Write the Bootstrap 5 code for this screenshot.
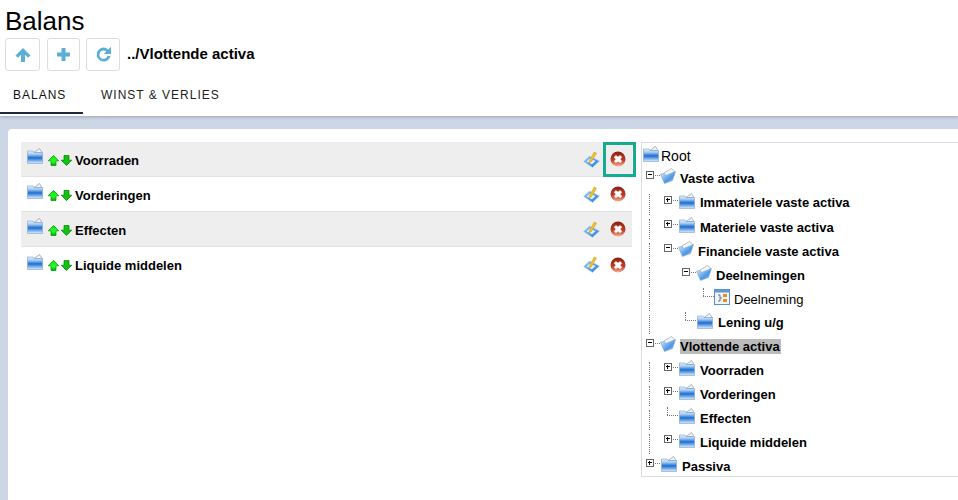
<!DOCTYPE html>
<html lang="nl">
<head>
<meta charset="utf-8">
<title>Balans</title>
<link href="https://cdn.jsdelivr.net/npm/bootstrap@5.3.0/dist/css/bootstrap.min.css" rel="stylesheet">
<style>
html,body{height:100%;overflow:hidden}
body{font-family:"Liberation Sans",Arial,sans-serif;color:#000;background:#ccd6e4}
.top-zone{background:#fff;height:116px;padding:7px 0 0;box-shadow:0 1px 3px rgba(60,80,110,.35);position:relative}
.page-title{font-size:26px;line-height:28px;margin:0 0 3px 5px;font-weight:400}
.tool-row{padding-left:5px;height:33px}
.tool-btn{width:35px;height:33px;padding:0;margin-right:7px;border:1px solid #ddd;border-radius:3px;background:#fff;display:flex;align-items:center;justify-content:center}
.tool-btn.mid{width:33px;margin-right:6px}
.tool-btn.last{width:34px}
.path-text{font-size:15px;font-weight:700}
.tab-row{margin-top:9px;height:34px;border:0}
.tab-row .nav-link{color:#222;font-size:12px;letter-spacing:1px;text-transform:uppercase;padding:0 0 0 13px;height:34px;line-height:30px;border-bottom:2px solid transparent;border-radius:0}
.tab-row .nav-link.tab-on{width:83px;border-bottom-color:#1c2a44;color:#111}
.tab-row .nav-link.tab-off{padding-left:18px}
.white-panel{margin:13px 0 0 8px;background:#fff;border-radius:4px 0 0 0;height:371px;padding:13px 0 0 13px;overflow:hidden}
.list-side{width:611px;flex:none}
.item-row{height:35px;border-bottom:1px solid #e2e2e2;padding-left:6px;font-size:13px;font-weight:700;line-height:15px}
.item-row.shade{background:#eee}
.item-row.tail{border-bottom:0}
.item-name{margin-left:2px;padding-top:2px}
.arr{margin-top:2px}
.row-ico{margin-top:-6px;flex:none}
.act-cell{width:33px;height:35px;margin-right:-4px;margin-left:3px;padding-right:4px;flex:none;display:flex;align-items:center;justify-content:center;border:3px solid transparent}
.act-cell.picked{border-color:#14ab90}
.tree-box{margin-left:9px;width:340px;flex:none;height:335px;border:1px solid #ddd;padding:2px 0 0 3px;font-size:13px;font-weight:700;line-height:15px}
.tr-line{height:24px;white-space:nowrap}
.tr-line.first{height:21px;margin-left:-2px;font-weight:400;font-size:14px}
.tr-line.tall{height:25px}
.tr-line.short{height:23px}
.gd{width:18px;flex:none;align-self:stretch;position:relative}
.gd.on::before{content:"";position:absolute;left:4px;top:4px;bottom:0;border-left:1px dotted #777}
.cn{width:15px;height:24px;flex:none;position:relative}
.cn::after{content:"";position:absolute;left:4px;right:0;top:9px;border-top:1px dotted #777}
.cn.tee::before{content:"";position:absolute;left:4px;top:1px;height:8px;border-left:1px dotted #777}
.cn .bx{position:absolute;left:1px;top:5px;width:8px;height:8px;border:1px solid #666;background:#fff;z-index:1}
.bx::before{content:"";position:absolute;left:1px;right:1px;top:2px;border-top:1px solid #000}
.bx.plus::after{content:"";position:absolute;top:1px;bottom:1px;left:2px;border-left:1px solid #000}
.lbl{margin-left:4px}
.lbl.wide{margin-left:5px}
.lbl.sel{background:#bbb;padding-right:1px}
.lbl.plain{font-weight:400;font-size:13px;margin-left:4px}
.nudge{margin-left:1px}
.root-name{margin-left:2px;margin-top:2px}
.tree-ico{margin-top:-4px;flex:none}
</style>
</head>
<body>
<svg width="0" height="0" class="position-absolute">
<defs>
<linearGradient id="fg" x1="0" y1="0" x2="0" y2="1"><stop offset="0" stop-color="#eaf3fc"/><stop offset=".28" stop-color="#9cc7ef"/><stop offset=".55" stop-color="#1e6cd2"/><stop offset=".78" stop-color="#7db2e9"/><stop offset="1" stop-color="#e3f0fb"/></linearGradient>
<linearGradient id="og" x1="0" y1="0" x2="1" y2="1"><stop offset="0" stop-color="#e4f1fb"/><stop offset=".6" stop-color="#4d97e4"/><stop offset="1" stop-color="#9fcaf2"/></linearGradient>
<linearGradient id="ag" x1="0" y1="0" x2="0" y2="1"><stop offset="0" stop-color="#00e800"/><stop offset=".6" stop-color="#2bff2b"/><stop offset="1" stop-color="#00a000"/></linearGradient>
<linearGradient id="eg" x1="0" y1="0" x2="1" y2="1"><stop offset="0" stop-color="#9ccdf5"/><stop offset="1" stop-color="#1f72d8"/></linearGradient>
<linearGradient id="rg" x1="0" y1="0" x2="0" y2="1"><stop offset="0" stop-color="#8a1e10"/><stop offset=".6" stop-color="#c03e26"/><stop offset="1" stop-color="#f4b49c"/></linearGradient>
<symbol id="fc" viewBox="0 0 16 16"><path d="M7 4.5 12.5 .5 15 4.5Z" fill="#f2f4f7" stroke="#8c98a8" stroke-width=".7"/><path d="M.5 3H6L7 4.5H15.5V15.5H.5Z" fill="url(#fg)" stroke="#8aa9cf" stroke-width=".7"/></symbol>
<symbol id="fo" viewBox="0 0 16 16"><path d="M4 5 11.5 .5 14.5 3 12 9 6 10Z" fill="#f4f6f9" stroke="#8c98a8" stroke-width=".6"/><path d="M.5 6 4 5.5 5.5 7.5 15.5 3.5 12.5 12.5 4.5 15.5 2 10Z" fill="url(#og)" stroke="#7fa8d6" stroke-width=".6"/></symbol>
<symbol id="au" viewBox="0 0 13 13"><path d="M6.5 1.5 11.8 6.8H9V11.5H4V6.8H1.2Z" fill="url(#ag)" stroke="#009000" stroke-width=".7"/></symbol>
<symbol id="ad" viewBox="0 0 13 13"><path d="M6.5 11.5 11.8 6.2H9V1.5H4V6.2H1.2Z" fill="#12c212" stroke="#008000" stroke-width=".7"/></symbol>
<symbol id="ed" viewBox="0 0 17 17"><path d="M.5 10.5 6.5 5 16.5 10 9.5 16.5Z" fill="url(#eg)" stroke="#b6d6f2" stroke-width=".6"/><path d="M3.5 10.5 7 7.5 12.5 10 9 13.2Z" fill="#e4f1fb"/><path d="M6 10.5 11.2 1 13.6 2.2 8.4 10.8 6 12Z" fill="#f2c227" stroke="#a98a20" stroke-width=".4"/></symbol>
<symbol id="de" viewBox="0 0 16 16"><circle cx="8" cy="8" r="7.5" fill="url(#rg)"/><path d="M4.2 6.2 5.8 4.4 8 6 10.2 4.4 11.8 6.2 10.2 8.2 11.8 10.2 10.2 11.8 8 10.4 5.8 11.8 4.2 10.2 5.8 8.2Z" fill="#fff" stroke="#fde8e0" stroke-width=".6" stroke-linejoin="round"/></symbol>
<symbol id="dc" viewBox="0 0 16 16"><rect x=".5" y=".5" width="15" height="15" fill="#eef5fc" stroke="#5f8fc6"/><rect x=".5" y=".5" width="15" height="3" fill="#5f9ad8"/><path d="M4 6H6V12H4M6 9H8" fill="none" stroke="#555" stroke-width=".8"/><rect x="9" y="5" width="4" height="3" fill="#f08a1c"/><rect x="9" y="10" width="4" height="3" fill="#f08a1c"/></symbol>
</defs>
</svg>

<header class="top-zone">
  <h1 class="page-title">Balans</h1>
  <div class="tool-row d-flex align-items-center">
    <button type="button" class="btn tool-btn" aria-label="Omhoog"><svg width="16" height="16" viewBox="0 0 16 16"><path d="M8 1 15.5 8.4 13 10.8 10 7.8V15H6V7.8L3 10.8 .5 8.4Z" fill="#5bafd6"/></svg></button>
    <button type="button" class="btn tool-btn mid" aria-label="Toevoegen"><svg width="15" height="15" viewBox="0 0 15 15"><path d="M5.5 1H9.5V5.5H14V9.5H9.5V14H5.5V9.5H1V5.5H5.5Z" fill="#5bafd6"/></svg></button>
    <button type="button" class="btn tool-btn last" aria-label="Vernieuwen"><svg width="17" height="17" viewBox="0 0 17 17"><path d="M8.5 1.5A7 7 0 1 0 15.6 10H12.6A4.2 4.2 0 1 1 8.5 4.4C9.6 4.4 10.6 4.8 11.3 5.5L8.8 8H16V.8L13.3 3.4A7 7 0 0 0 8.5 1.5Z" fill="#5bafd6"/></svg></button>
    <span class="path-text">../Vlottende activa</span>
  </div>
  <nav class="nav tab-row">
    <a class="nav-link tab-on" href="#">Balans</a>
    <a class="nav-link tab-off" href="#">Winst &amp; verlies</a>
  </nav>
</header>

<main class="white-panel d-flex align-items-start">
  <section class="list-side">
    <div class="item-row shade d-flex align-items-center">
      <svg width="16" height="16" class="row-ico"><use href="#fc"/></svg>
      <svg width="13" height="13" class="arr ms-1"><use href="#au"/></svg><svg width="13" height="13" class="arr"><use href="#ad"/></svg>
      <span class="item-name">Voorraden</span>
      <svg width="17" height="17" class="ms-auto"><use href="#ed"/></svg>
      <span class="act-cell picked"><svg width="16" height="16"><use href="#de"/></svg></span>
    </div>
    <div class="item-row d-flex align-items-center">
      <svg width="16" height="16" class="row-ico"><use href="#fc"/></svg>
      <svg width="13" height="13" class="arr ms-1"><use href="#au"/></svg><svg width="13" height="13" class="arr"><use href="#ad"/></svg>
      <span class="item-name">Vorderingen</span>
      <svg width="17" height="17" class="ms-auto"><use href="#ed"/></svg>
      <span class="act-cell"><svg width="16" height="16"><use href="#de"/></svg></span>
    </div>
    <div class="item-row shade d-flex align-items-center">
      <svg width="16" height="16" class="row-ico"><use href="#fc"/></svg>
      <svg width="13" height="13" class="arr ms-1"><use href="#au"/></svg><svg width="13" height="13" class="arr"><use href="#ad"/></svg>
      <span class="item-name">Effecten</span>
      <svg width="17" height="17" class="ms-auto"><use href="#ed"/></svg>
      <span class="act-cell"><svg width="16" height="16"><use href="#de"/></svg></span>
    </div>
    <div class="item-row tail d-flex align-items-center">
      <svg width="16" height="16" class="row-ico"><use href="#fc"/></svg>
      <svg width="13" height="13" class="arr ms-1"><use href="#au"/></svg><svg width="13" height="13" class="arr"><use href="#ad"/></svg>
      <span class="item-name">Liquide middelen</span>
      <svg width="17" height="17" class="ms-auto"><use href="#ed"/></svg>
      <span class="act-cell"><svg width="16" height="16"><use href="#de"/></svg></span>
    </div>
  </section>

  <section class="tree-box">
    <div class="tr-line first d-flex align-items-center"><svg width="16" height="16" class="tree-ico"><use href="#fc"/></svg><span class="root-name">Root</span></div>
    <div class="tr-line d-flex align-items-center"><span class="cn"><i class="bx"></i></span><svg width="16" height="16" class="tree-ico"><use href="#fo"/></svg><span class="lbl">Vaste activa</span></div>
    <div class="tr-line tall d-flex align-items-center"><span class="gd on"></span><span class="cn"><i class="bx plus"></i></span><svg width="16" height="16" class="tree-ico nudge"><use href="#fc"/></svg><span class="lbl wide">Immateriele vaste activa</span></div>
    <div class="tr-line d-flex align-items-center"><span class="gd on"></span><span class="cn"><i class="bx plus"></i></span><svg width="16" height="16" class="tree-ico nudge"><use href="#fc"/></svg><span class="lbl wide">Materiele vaste activa</span></div>
    <div class="tr-line d-flex align-items-center"><span class="gd on"></span><span class="cn"><i class="bx"></i></span><svg width="16" height="16" class="tree-ico"><use href="#fo"/></svg><span class="lbl">Financiele vaste activa</span></div>
    <div class="tr-line d-flex align-items-center"><span class="gd on"></span><span class="gd"></span><span class="cn"><i class="bx"></i></span><svg width="16" height="16" class="tree-ico"><use href="#fo"/></svg><span class="lbl">Deelnemingen</span></div>
    <div class="tr-line d-flex align-items-center"><span class="gd on"></span><span class="gd"></span><span class="gd"></span><span class="cn tee"></span><svg width="16" height="16" class="tree-ico"><use href="#dc"/></svg><span class="lbl plain">Deelneming</span></div>
    <div class="tr-line short d-flex align-items-center"><span class="gd on"></span><span class="gd"></span><span class="cn tee"></span><svg width="16" height="16" class="tree-ico nudge"><use href="#fc"/></svg><span class="lbl wide">Lening u/g</span></div>
    <div class="tr-line d-flex align-items-center"><span class="cn"><i class="bx"></i></span><svg width="16" height="16" class="tree-ico"><use href="#fo"/></svg><span class="lbl sel">Vlottende activa</span></div>
    <div class="tr-line d-flex align-items-center"><span class="gd on"></span><span class="cn"><i class="bx plus"></i></span><svg width="16" height="16" class="tree-ico nudge"><use href="#fc"/></svg><span class="lbl wide">Voorraden</span></div>
    <div class="tr-line d-flex align-items-center"><span class="gd on"></span><span class="cn"><i class="bx plus"></i></span><svg width="16" height="16" class="tree-ico nudge"><use href="#fc"/></svg><span class="lbl wide">Vorderingen</span></div>
    <div class="tr-line d-flex align-items-center"><span class="gd on"></span><span class="cn tee"></span><svg width="16" height="16" class="tree-ico nudge"><use href="#fc"/></svg><span class="lbl wide">Effecten</span></div>
    <div class="tr-line d-flex align-items-center"><span class="gd on"></span><span class="cn"><i class="bx plus"></i></span><svg width="16" height="16" class="tree-ico nudge"><use href="#fc"/></svg><span class="lbl wide">Liquide middelen</span></div>
    <div class="tr-line d-flex align-items-center"><span class="cn"><i class="bx plus"></i></span><svg width="16" height="16" class="tree-ico nudge"><use href="#fc"/></svg><span class="lbl wide">Passiva</span></div>
  </section>
</main>
<script src="https://cdn.jsdelivr.net/npm/bootstrap@5.3.0/dist/js/bootstrap.bundle.min.js"></script>
</body>
</html>
